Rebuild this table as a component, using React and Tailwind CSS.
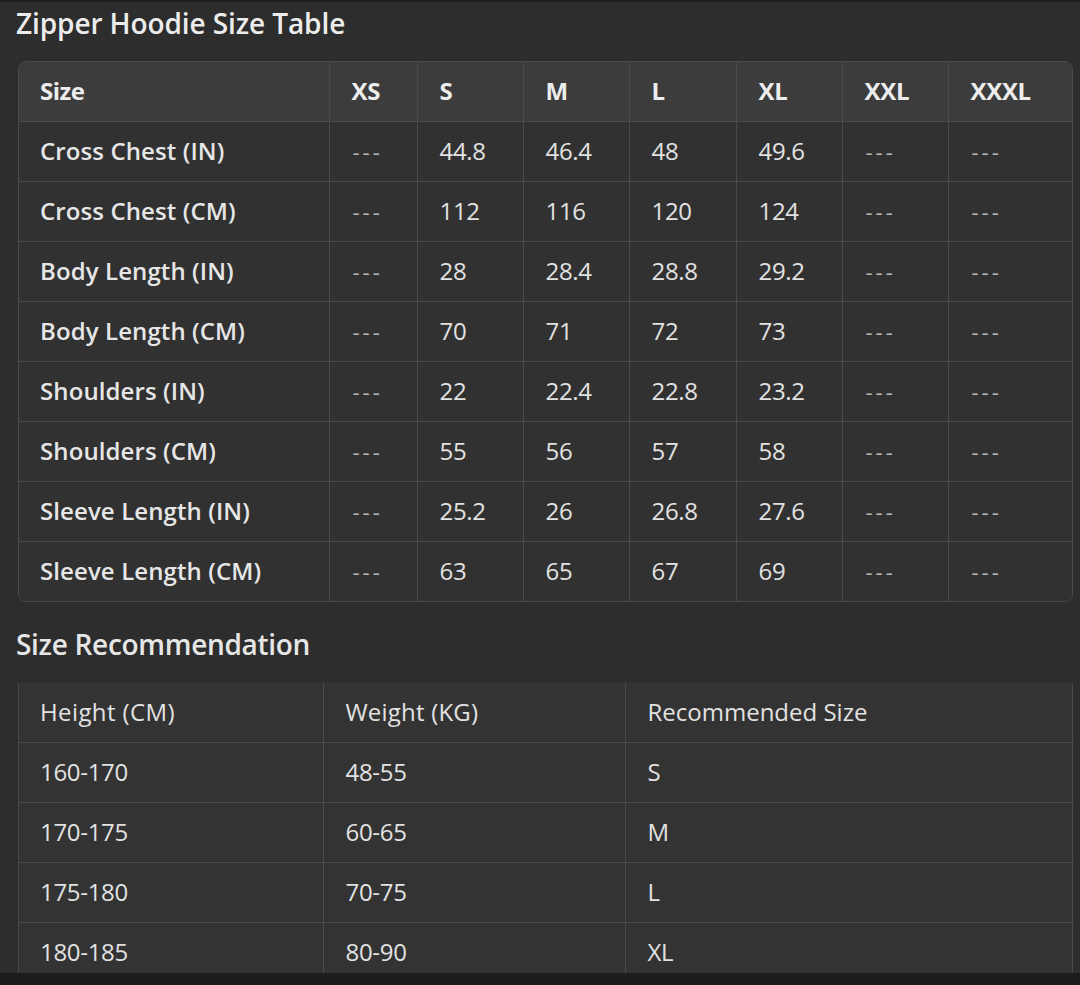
import React from "react";

const sizes = ["XS", "S", "M", "L", "XL", "XXL", "XXXL"];
const rows = [
  ["Cross Chest (IN)", "44.8", "46.4", "48", "49.6"],
  ["Cross Chest (CM)", "112", "116", "120", "124"],
  ["Body Length (IN)", "28", "28.4", "28.8", "29.2"],
  ["Body Length (CM)", "70", "71", "72", "73"],
  ["Shoulders (IN)", "22", "22.4", "22.8", "23.2"],
  ["Shoulders (CM)", "55", "56", "57", "58"],
  ["Sleeve Length (IN)", "25.2", "26", "26.8", "27.6"],
  ["Sleeve Length (CM)", "63", "65", "67", "69"],
];
const widths = [310, 88, 106, 106, 107, 106, 106, 126];

const rec = [
  ["160-170", "48-55", "S"],
  ["170-175", "60-65", "M"],
  ["175-180", "70-75", "L"],
  ["180-185", "80-90", "XL"],
];

const font = { fontFamily: '"Open Sans", "Noto Sans", sans-serif' };

export default function App() {
  return (
    <div className="w-[1080px] h-[985px] bg-[#1c1c1c] flex flex-col overflow-hidden" style={font}>
      <div className="h-[2px] bg-[#1f1f1f]" />
      <div className="h-[971px] bg-[#2d2d2d] overflow-hidden">
        <h1 className="pl-[16px] h-[42px] flex items-center text-[28px] font-semibold text-[#ececec] tracking-[-0.1px]">
          Zipper Hoodie Size Table
        </h1>
        <div className="h-[17px]" />
        <div className="ml-[18px] w-[1055px] rounded-[8px] border border-[#4a4a4a] overflow-hidden">
          <table className="w-full border-collapse table-fixed">
            <colgroup>
              {widths.map((w, i) => (
                <col key={i} style={{ width: w }} />
              ))}
            </colgroup>
            <thead>
              <tr className="h-[59px] bg-[#3c3c3c]">
                <th className="text-left pl-[21px] text-[24px] font-bold text-[#ededed] border-r border-[#4a4a4a] tracking-[-0.5px]">Size</th>
                {sizes.map((s, i) => (
                  <th
                    key={s}
                    className={`text-left pl-[22px] text-[24px] font-bold text-[#ededed] tracking-[-0.3px] ${i < sizes.length - 1 ? "border-r border-[#4a4a4a]" : ""}`}
                  >
                    {s}
                  </th>
                ))}
              </tr>
            </thead>
            <tbody>
              {rows.map((r) => (
                <tr key={r[0]} className="h-[60px] bg-[#313131] border-t border-[#4a4a4a]">
                  <td className="pl-[21px] text-[24px] font-semibold text-[#e6e6e6] border-r border-[#4a4a4a] tracking-[0.1px]">{r[0]}</td>
                  <td className="pl-[23px] text-[22px] text-[#b5b5b5] border-r border-[#4a4a4a] tracking-[3px]">---</td>
                  {r.slice(1).map((v, i) => (
                    <td key={i} className="pl-[22px] text-[24px] text-[#e2e2e2] border-r border-[#4a4a4a] tracking-[-0.3px]">{v}</td>
                  ))}
                  <td className="pl-[23px] text-[22px] text-[#b5b5b5] border-r border-[#4a4a4a] tracking-[3px]">---</td>
                  <td className="pl-[23px] text-[22px] text-[#b5b5b5] tracking-[3px]">---</td>
                </tr>
              ))}
            </tbody>
          </table>
        </div>
        <h2 className="mt-[20px] pl-[16px] h-[44px] flex items-center text-[28px] font-semibold text-[#e6e6e6] tracking-[-0.3px]">
          Size Recommendation
        </h2>
        <div className="h-[17px]" />
        <div className="ml-[18px] w-[1055px] border-l border-r border-[#4a4a4a] bg-[#333333]">
          <table className="w-full border-collapse table-fixed">
            <colgroup>
              <col style={{ width: 304 }} />
              <col style={{ width: 302 }} />
              <col style={{ width: 449 }} />
            </colgroup>
            <thead>
              <tr className="h-[59px]">
                <th className="text-left pl-[21px] text-[24px] font-normal text-[#e2e2e2] border-r border-[#4a4a4a] tracking-[0.4px]">Height (CM)</th>
                <th className="text-left pl-[22px] text-[24px] font-normal text-[#e2e2e2] border-r border-[#4a4a4a] tracking-[0.2px]">Weight (KG)</th>
                <th className="text-left pl-[22px] text-[24px] font-normal text-[#e2e2e2] tracking-[0px]">Recommended Size</th>
              </tr>
            </thead>
            <tbody>
              {rec.map((r) => (
                <tr key={r[0]} className="h-[60px] border-t border-[#4a4a4a]">
                  <td className="pl-[21px] text-[24px] text-[#e2e2e2] border-r border-[#4a4a4a] tracking-[-0.3px]">{r[0]}</td>
                  <td className="pl-[22px] text-[24px] text-[#e2e2e2] border-r border-[#4a4a4a] tracking-[-0.3px]">{r[1]}</td>
                  <td className="pl-[22px] text-[24px] text-[#e2e2e2] tracking-[-0.3px]">{r[2]}</td>
                </tr>
              ))}
            </tbody>
          </table>
        </div>
      </div>
    </div>
  );
}
